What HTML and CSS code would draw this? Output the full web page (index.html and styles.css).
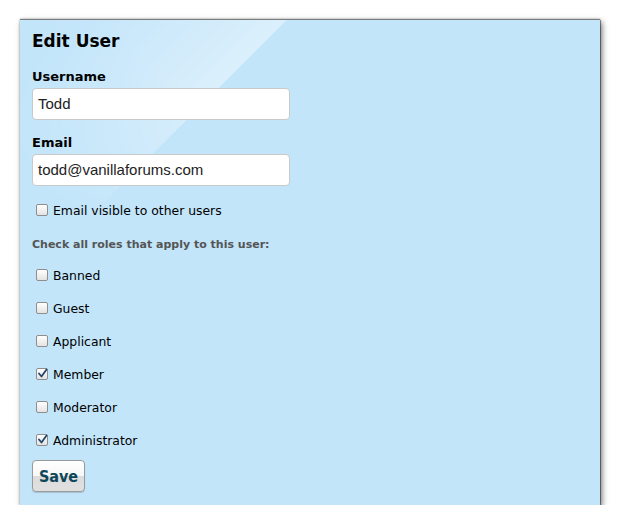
FILE: index.html
```html
<!DOCTYPE html>
<html>
<head>
<meta charset="utf-8">
<link rel="stylesheet" href="styles.css">
</head>
<body>
<div class="panel">
  <h1 class="title">Edit User</h1>
  <div class="field">
    <label class="label">Username</label>
    <div class="input">Todd</div>
  </div>
  <div class="field">
    <label class="label">Email</label>
    <div class="input">todd@vanillaforums.com</div>
  </div>
  <div class="check first"><span class="box"></span><span>Email visible to other users</span></div>
  <div class="note">Check all roles that apply to this user:</div>
  <div class="roles">
    <div class="check"><span class="box"></span><span>Banned</span></div>
    <div class="check"><span class="box"></span><span>Guest</span></div>
    <div class="check"><span class="box"></span><span>Applicant</span></div>
    <div class="check"><span class="box checked"><svg viewBox="0 0 13 13" width="13" height="13"><path d="M3 6.5 L5.5 9.5 L10.5 2.5" fill="none" stroke="#23466a" stroke-width="1.8" stroke-linecap="round" stroke-linejoin="round"/></svg></span><span>Member</span></div>
    <div class="check"><span class="box"></span><span>Moderator</span></div>
    <div class="check"><span class="box checked"><svg viewBox="0 0 13 13" width="13" height="13"><path d="M3 6.5 L5.5 9.5 L10.5 2.5" fill="none" stroke="#23466a" stroke-width="1.8" stroke-linecap="round" stroke-linejoin="round"/></svg></span><span>Administrator</span></div>
  </div>
  <div class="actions"><button class="save">Save</button></div>
</div>
</body>
</html>
```
FILE: styles.css
```css
html, body { margin: 0; padding: 0; background: #ffffff; }
body { padding: 19px 0 0 20px; font-family: "DejaVu Sans", sans-serif; color: #000; }
.panel {
  position: relative;
  box-sizing: border-box;
  width: 580px;
  height: 486px;
  padding: 10px 12px 0 12px;
  border-top: 1px solid #7d7d7d;
  background: #c2e5fa;
  box-shadow: 1px 1px 0 rgba(0,0,0,0.35), 2px 3px 6px rgba(0,0,0,0.55), 0 0 2px rgba(0,0,0,0.35);
}
.panel::before {
  content: "";
  position: absolute;
  left: 0; top: 0; right: 0; bottom: 0;
  background: linear-gradient(135deg, rgba(255,255,255,0.05) 40px, rgba(255,255,255,0.22) 120px, rgba(255,255,255,0.42) 188px, rgba(255,255,255,0) 189px);
  -webkit-mask-image: radial-gradient(ellipse 300px 230px at 200px 0px, #000 30%, transparent 100%);
  mask-image: radial-gradient(ellipse 300px 230px at 200px 0px, #000 30%, transparent 100%);
  pointer-events: none;
}
.panel > * { position: relative; }
.title { margin: 0; font-size: 17px; font-weight: bold; line-height: 22px; height: 22px; }
.field { margin-top: 16px; }
.field + .field { margin-top: 14px; }
.label { display: block; font-size: 13px; font-weight: bold; line-height: 18px; }
.input {
  box-sizing: border-box;
  margin-top: 2px;
  width: 258px;
  height: 32px;
  background: #fff;
  border: 1px solid #c9c9c9;
  border-radius: 4px;
  padding: 0 5px;
  font-family: "Liberation Sans", Arial, sans-serif;
  font-size: 15px;
  line-height: 30px;
  color: #222;
}
.check { display: flex; align-items: center; gap: 5px; height: 20px; font-size: 12.4px; padding-left: 4px; }
.check.first { margin-top: 14px; }
.box {
  box-sizing: border-box;
  width: 12px; height: 12px;
  border: 1px solid #8e8e8e;
  border-radius: 2px;
  background: linear-gradient(#ffffff, #e3e3e3);
  display: inline-flex;
  position: relative;
}
.box svg { position: absolute; left: -1px; top: -2px; }
.note { margin-top: 18px; font-size: 11px; font-weight: bold; color: #555; line-height: 14px; }
.roles { margin-top: 13px; display: flex; flex-direction: column; gap: 13px; }
.actions { margin-top: 10px; }
.save {
  box-sizing: border-box;
  width: 53px; height: 32px;
  border: 1px solid #9a9a9a;
  border-radius: 4px;
  background: linear-gradient(#ffffff 0%, #f7f7f7 50%, #dcdcdc 51%, #e0e0e0 100%);
  font-family: "DejaVu Sans Condensed", "DejaVu Sans", sans-serif;
  font-weight: bold;
  font-size: 16px;
  color: #0d4658;
  padding: 0;
  box-shadow: 0 1px 1px rgba(0,0,0,0.15);
}
```
